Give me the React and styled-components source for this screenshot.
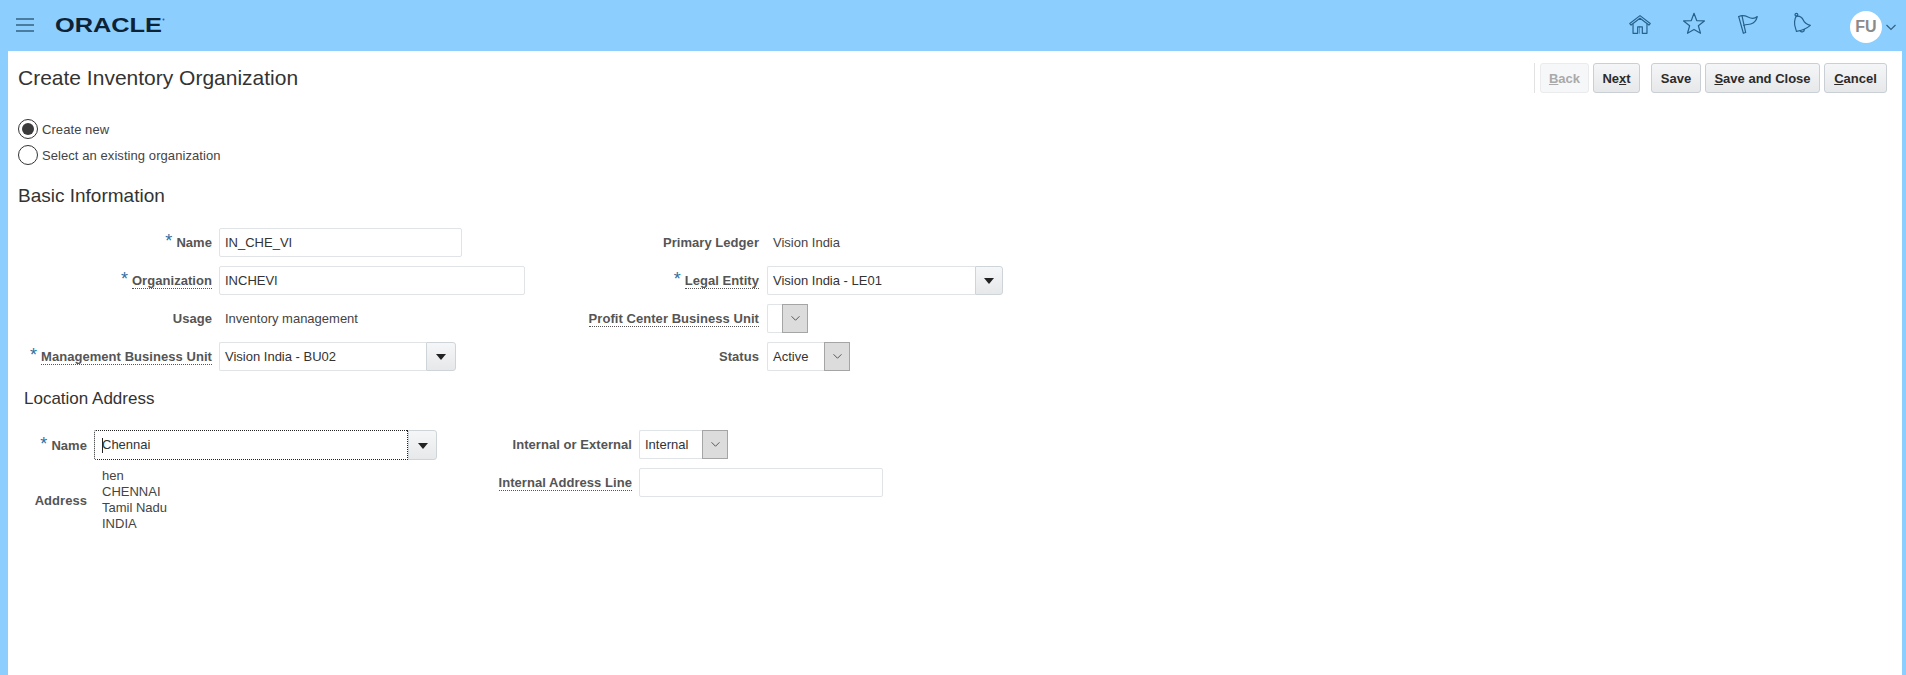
import React from 'react'
import styled, { createGlobalStyle } from 'styled-components'

const GlobalStyle = createGlobalStyle`
  html, body { margin: 0; padding: 0; background: #8ccfff; }
  body { font-family: "Liberation Sans", Arial, sans-serif; color: #333; }
`

const Page = styled.div`
  width: 1906px;
  height: 675px;
  background: #8ccfff;
  display: flex;
  flex-direction: column;
  overflow: hidden;
`

const TopBar = styled.header`
  height: 51px;
  flex: none;
  display: flex;
  align-items: center;
  padding: 0 0 0 16px;
`

const Menu = styled.svg`
  margin-top: -2px;
`

const Logo = styled.svg`
  margin-left: 21px;
  margin-top: -2px;
`

const TopIcons = styled.div`
  margin-left: auto;
  display: flex;
  align-items: center;
  gap: 28px;
  padding-right: 10px;
`

const TopIcon = styled.svg`
  width: 26px;
  height: 26px;
  margin-top: -3px;
  fill: none;
  stroke: #26618c;
  stroke-width: 1.3;
  stroke-linejoin: round;
  stroke-linecap: round;
`

const UserMenu = styled.div`
  display: flex;
  align-items: center;
  gap: 4px;
  margin-left: 7px;
  margin-top: 3px;
`

const Avatar = styled.span`
  width: 32px;
  height: 32px;
  border-radius: 50%;
  background: #fff;
  color: #8a8a8a;
  font-size: 16px;
  font-weight: bold;
  display: flex;
  align-items: center;
  justify-content: center;
`

const Content = styled.main`
  flex: 1;
  background: #fff;
  margin: 0 4px 0 8px;
  padding: 0 0 0 10px;
`

const HeaderRow = styled.div`
  display: flex;
  align-items: center;
  justify-content: space-between;
  padding: 12px 15px 0 0;
  height: 30px;
`

const Title = styled.h1`
  margin: 0;
  font-size: 21px;
  font-weight: normal;
  color: #333;
`

const Actions = styled.div`
  display: flex;
  align-items: center;
  gap: 4px;
`

const Separator = styled.span`
  width: 1px;
  height: 30px;
  background: #e2e2e2;
  margin-right: 1px;
`

const Button = styled.button`
  height: 30px;
  width: ${p => p.$w}px;
  margin-left: ${p => p.$gap || 0}px;
  padding: 0;
  border: 1px solid ${p => (p.disabled ? '#e9ebec' : '#c9cfd4')};
  border-radius: 3px;
  background: ${p => (p.disabled ? '#f6f7f8' : 'linear-gradient(#f5f6f7, #e6e8ea)')};
  color: ${p => (p.disabled ? '#a9a9a9' : '#2b2b2b')};
  font-family: inherit;
  font-size: 13px;
  font-weight: bold;
`

const RadioGroup = styled.div`
  margin-top: 26px;
  display: flex;
  flex-direction: column;
  gap: 6px;
`

const RadioRow = styled.label`
  display: flex;
  align-items: center;
  gap: 4px;
  font-size: 13px;
  letter-spacing: 0.07px;
  color: #444;
  height: 20px;
`

const RadioDot = styled.span`
  width: 18px;
  height: 18px;
  border: 1px solid #333;
  border-radius: 50%;
  display: flex;
  align-items: center;
  justify-content: center;
  &::after {
    content: '';
    display: ${p => (p.$on ? 'block' : 'none')};
    width: 12px;
    height: 12px;
    border-radius: 50%;
    background: #3a3a3a;
  }
`

const SectionTitle = styled.h2`
  margin: ${p => p.$top}px 0 0 ${p => p.$indent || 0}px;
  font-size: ${p => p.$size}px;
  line-height: 22px;
  font-weight: normal;
  color: #333;
`

const Columns = styled.div`
  display: flex;
  margin-top: ${p => p.$top}px;
`

const FormGrid = styled.div`
  display: grid;
  grid-template-columns: ${p => p.$label}px ${p => p.$field}px;
  grid-auto-rows: minmax(${p => p.$row}px, auto);
  column-gap: ${p => p.$gap || 7}px;
  align-items: center;
  align-content: start;
`

const Label = styled.div`
  text-align: right;
  font-size: 13px;
  font-weight: bold;
  letter-spacing: 0.05px;
  color: #555;
  white-space: nowrap;
`

const Req = styled.span`
  color: #2f6f9f;
  font-size: 18px;
  line-height: 10px;
  font-weight: normal;
  margin-right: 4px;
`

const Dotted = styled.span`
  border-bottom: 1px dotted #555;
`

const TextField = styled.div`
  box-sizing: border-box;
  width: ${p => p.$w}px;
  height: 29px;
  border: 1px solid #e1e4e6;
  border-radius: 2px;
  padding: 0 5px;
  font-size: 13px;
  line-height: 27px;
  color: #333;
  background: #fff;
`

const Value = styled.div`
  font-size: 13px;
  color: #444;
  padding-left: 6px;
`

const Combo = styled.div`
  display: flex;
  width: ${p => p.$w}px;
  height: ${p => p.$h || 29}px;
`

const ComboInput = styled.div`
  flex: 1;
  box-sizing: border-box;
  border: 1px solid #e1e4e6;
  border-right: 0;
  border-radius: 2px 0 0 2px;
  padding: 0 5px;
  font-size: 13px;
  line-height: ${p => (p.$h || 29) - 2}px;
  color: #333;
`

const FocusInput = styled(ComboInput)`
  border: 1px dotted #222;
  padding-left: 7px;
  position: relative;
  &::before {
    content: '';
    position: absolute;
    left: 7px;
    top: 7px;
    height: 15px;
    width: 1px;
    background: #222;
  }
`

const ComboButton = styled.span`
  box-sizing: border-box;
  width: ${p => p.$w}px;
  display: flex;
  align-items: center;
  justify-content: center;
  border: 1px solid #cfd4d8;
  border-radius: 0 3px 3px 0;
  background: linear-gradient(#f5f6f7, #e6e8ea);
  &::after {
    content: '';
    margin-top: 2px;
    border-left: 5px solid transparent;
    border-right: 5px solid transparent;
    border-top: 6px solid #222;
  }
`

const SelectButton = styled.span`
  box-sizing: border-box;
  width: 26px;
  display: flex;
  align-items: center;
  justify-content: center;
  border: 1px solid #a5a5a5;
  background: #dcdcdc;
  svg { width: 11px; height: 7px; fill: none; stroke: #444; stroke-width: 1; }
`

const Address = styled.div`
  font-size: 13px;
  line-height: 16px;
  color: #444;
  padding-left: 15px;
`

const AddressRow = styled.div`
  grid-column: 1 / -1;
  display: grid;
  grid-template-columns: 69px auto;
  align-items: center;
  margin-top: 3px;
`

const Chevron = () => (
  <svg viewBox="0 0 12 8"><path d="M1.5 1.5 6 6l4.500-4.500" /></svg>
)

const Select = ({ w, value }) => (
  <Combo $w={w}>
    <ComboInput>{value}</ComboInput>
    <SelectButton><Chevron /></SelectButton>
  </Combo>
)

const Lov = ({ w, value, btn = 29 }) => (
  <Combo $w={w}>
    <ComboInput>{value}</ComboInput>
    <ComboButton $w={btn} />
  </Combo>
)

const HomeIcon = () => (
  <TopIcon viewBox="0 0 28 28">
    <path d="M3 13.500 14 5l11 8.500-1.400 1.600L14 7.800 4.400 15.100z" />
    <path d="M6.500 14.500V24h5v-7h5v7h5v-9.500" />
    <path d="M13.500 17v7" strokeWidth="0.6" />
  </TopIcon>
)

const StarIcon = () => (
  <TopIcon viewBox="0 0 28 28">
    <path d="M14 2.500l2.900 7.800 8.300.4-6.500 5.200 2.300 8.100L14 19.900 7 24l2.300-8.100-6.500-5.200 8.300-.4z" />
  </TopIcon>
)

const FlagIcon = () => (
  <TopIcon viewBox="0 0 28 28">
    <path d="M4 6c4-2 7-1 10 .5s7 2 10-.5c-1 4-4 7-7 8s-5 0-7.500 1.500" />
    <path d="M4 6l5 18 2.500-.8L7.500 5" />
  </TopIcon>
)

const BellIcon = () => (
  <TopIcon viewBox="0 0 28 28">
    <circle cx="8" cy="4" r="1.500" />
    <path d="M8 5.500c4-.5 6.500 2 7.500 4.500s4 4.500 7.500 5.500c-3.500 3-9 5.500-15 6.500-.5-3-2.500-6-2-10.500C6.200 9.500 6.500 7 8 5.500z" />
    <path d="M12 21.500a2.500 2.500 0 0 0 4.500-1.800" />
  </TopIcon>
)

export default function App() {
  return (
    <Page>
      <GlobalStyle />
      <TopBar>
        <Menu width="18" height="14" viewBox="0 0 18 14">
          <path d="M0 1h18M0 7h18M0 13h18" stroke="#33617f" strokeWidth="1.500" />
        </Menu>
        <Logo width="112" height="20" viewBox="0 0 112 20">
          <text x="0" y="17" fontFamily="Liberation Sans" fontSize="19.5" fontWeight="bold" fill="#0e2236" textLength="107" lengthAdjust="spacingAndGlyphs">ORACLE</text>
          <circle cx="108.500" cy="4.500" r="1" fill="#3b5f7a" />
        </Logo>
        <TopIcons>
          <HomeIcon />
          <StarIcon />
          <FlagIcon />
          <BellIcon />
          <UserMenu>
            <Avatar>FU</Avatar>
            <svg width="10" height="7" viewBox="0 0 10 7">
              <path d="M.5 1 5 5.500 9.500 1" fill="none" stroke="#33617f" strokeWidth="1.200" />
            </svg>
          </UserMenu>
        </TopIcons>
      </TopBar>
      <Content>
        <HeaderRow>
          <Title>Create Inventory Organization</Title>
          <Actions>
            <Separator />
            <Button disabled $w={49}><u>B</u>ack</Button>
            <Button $w={47}>Ne<u>x</u>t</Button>
            <Button $w={50} $gap={7}>Save</Button>
            <Button $w={115}><u>S</u>ave and Close</Button>
            <Button $w={63}><u>C</u>ancel</Button>
          </Actions>
        </HeaderRow>
        <RadioGroup>
          <RadioRow><RadioDot $on />Create new</RadioRow>
          <RadioRow><RadioDot />Select an existing organization</RadioRow>
        </RadioGroup>
        <SectionTitle $top={20} $size={19}>Basic Information</SectionTitle>
        <Columns $top={16}>
          <FormGrid $label={194} $field={340} $row={38}>
            <Label><Req>*</Req>Name</Label>
            <TextField $w={243}>IN_CHE_VI</TextField>
            <Label><Req>*</Req><Dotted>Organization</Dotted></Label>
            <TextField $w={306}>INCHEVI</TextField>
            <Label>Usage</Label>
            <Value>Inventory management</Value>
            <Label><Req>*</Req><Dotted>Management Business Unit</Dotted></Label>
            <Lov w={237} btn={30} value="Vision India - BU02" />
          </FormGrid>
          <FormGrid $label={200} $field={299} $row={38} $gap={8}>
            <Label>Primary Ledger</Label>
            <Value>Vision India</Value>
            <Label><Req>*</Req><Dotted>Legal Entity</Dotted></Label>
            <Lov w={236} value="Vision India - LE01" btn={28} />
            <Label><Dotted>Profit Center Business Unit</Dotted></Label>
            <Select w={41} value="" />
            <Label>Status</Label>
            <Select w={83} value="Active" />
          </FormGrid>
        </Columns>
        <SectionTitle $top={13} $indent={6} $size={17}>Location Address</SectionTitle>
        <Columns $top={15}>
          <FormGrid $label={69} $field={390} $row={40}>
            <Label><Req>*</Req>Name</Label>
            <Combo $w={343} $h={30}>
              <FocusInput $h={30}>Chennai</FocusInput>
              <ComboButton $w={29} />
            </Combo>
            <AddressRow>
              <Label>Address</Label>
              <Address>hen<br />CHENNAI<br />Tamil Nadu<br />INDIA</Address>
            </AddressRow>
          </FormGrid>
          <FormGrid $label={148} $field={300} $row={38}>
            <Label>Internal or External</Label>
            <Select w={89} value="Internal" />
            <Label><Dotted>Internal Address Line</Dotted></Label>
            <TextField $w={244} />
          </FormGrid>
        </Columns>
      </Content>
    </Page>
  )
}
